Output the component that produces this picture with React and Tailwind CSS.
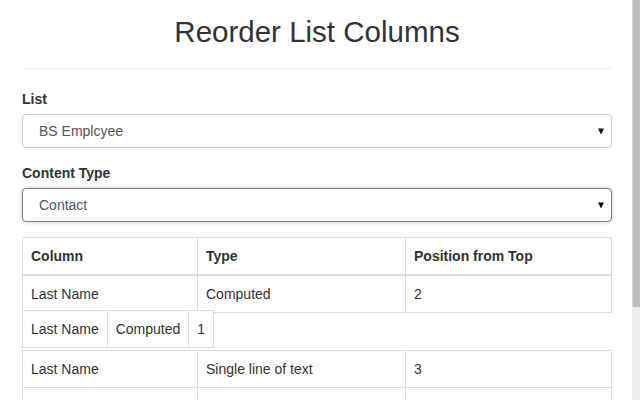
import React from "react";

function Arrow() {
  return (
    <svg width="6" height="7" viewBox="0 0 6 7" className="shrink-0">
      <polygon points="0,0.5 6,0.5 3,6.5" fill="#111" />
    </svg>
  );
}

function SelectBox({ value, focused }) {
  return (
    <div
      className={
        focused
          ? "flex h-[34px] items-center justify-between rounded-[4px] border border-[#7d7d7d] bg-white pl-4 pr-[7px] text-sm text-[#555] shadow-[0_0_4px_rgba(0,0,0,0.22)]"
          : "flex h-[34px] items-center justify-between rounded-[4px] border border-[#cccccc] bg-white pl-4 pr-[7px] text-sm text-[#555]"
      }
    >
      <span>{value}</span>
      <Arrow />
    </div>
  );
}

const rows = [
  ["Last Name", "Single line of text", "3"],
  ["First Name", "Single line of text", "4"],
  ["Email", "Single line of text", "5"],
];

export default function App() {
  return (
    <div className="flex h-[400px] w-[640px] overflow-hidden bg-white font-['Liberation_Sans',Arial,sans-serif] text-[#333]">
      <div className="min-w-0 flex-1 overflow-hidden">
        <div className="pl-[22px] pr-[20px] pt-[15px] pb-[59px]">
          <h1 className="text-center text-[29.5px] leading-[33px] font-normal text-[#333]">
            Reorder List Columns
          </h1>
          <hr className="mt-[20px] mb-[20px] border-0 border-t border-[#eeeeee]" />

          <div className="mb-[15px]">
            <label className="mb-[5px] block text-sm leading-5 font-bold">List</label>
            <SelectBox value="BS Emplcyee" />
          </div>

          <div className="mb-[15px]">
            <label className="mb-[5px] block text-sm leading-5 font-bold">Content Type</label>
            <SelectBox value="Contact" focused />
          </div>

          <div className="relative">
            <table className="w-full border-separate border-spacing-0 text-sm leading-5">
              <thead>
                <tr>
                  <th className="w-[176px] border-t border-b-2 border-l border-r border-[#dddddd] p-2 text-left font-bold">
                    Column
                  </th>
                  <th className="w-[208px] border-t border-b-2 border-r border-[#dddddd] p-2 text-left font-bold">
                    Type
                  </th>
                  <th className="border-t border-b-2 border-r border-[#dddddd] p-2 text-left font-bold">
                    Position from Top
                  </th>
                </tr>
              </thead>
              <tbody>
                <tr>
                  <td className="border-b border-l border-r border-[#dddddd] p-2">Last Name</td>
                  <td className="border-b border-r border-[#dddddd] p-2">Computed</td>
                  <td className="border-b border-r border-[#dddddd] p-2">2</td>
                </tr>
                <tr>
                  <td colSpan={3} className="h-[37px] p-0"></td>
                </tr>
                {rows.map((r, i) => (
                  <tr key={i}>
                    <td
                      className={
                        i === 0
                          ? "border-t border-b border-l border-r border-[#dddddd] p-2"
                          : "border-b border-l border-r border-[#dddddd] p-2"
                      }
                    >
                      {r[0]}
                    </td>
                    <td
                      className={
                        i === 0
                          ? "border-t border-b border-r border-[#dddddd] p-2"
                          : "border-b border-r border-[#dddddd] p-2"
                      }
                    >
                      {r[1]}
                    </td>
                    <td
                      className={
                        i === 0
                          ? "border-t border-b border-r border-[#dddddd] p-2"
                          : "border-b border-r border-[#dddddd] p-2"
                      }
                    >
                      {r[2]}
                    </td>
                  </tr>
                ))}
              </tbody>
            </table>

            <table className="absolute left-0 top-[73px] border-separate border-spacing-0 bg-white text-sm leading-5">
              <tbody>
                <tr>
                  <td className="border border-[#dddddd] p-2">Last Name</td>
                  <td className="border-t border-b border-r border-[#dddddd] p-2">Computed</td>
                  <td className="border-t border-b border-r border-[#dddddd] p-2">1</td>
                </tr>
              </tbody>
            </table>
          </div>
        </div>
      </div>

      <div className="flex w-[8px] shrink-0 flex-col bg-[#eeeeee]">
        <div className="h-[307px] border-l border-[#d8d8d8] bg-[#bfbfbf]"></div>
      </div>
    </div>
  );
}
